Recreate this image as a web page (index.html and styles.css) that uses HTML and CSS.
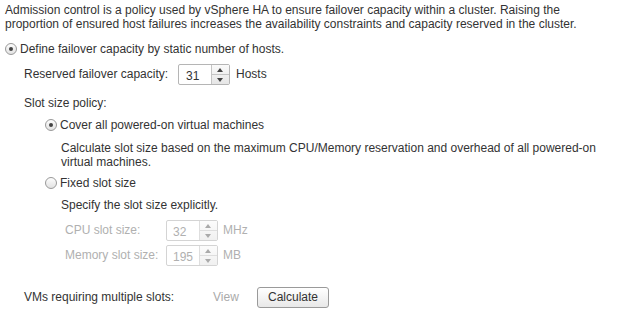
FILE: index.html
```html
<!DOCTYPE html>
<html lang="en">

<head>
    <meta charset="UTF-8">
    <title>Admission Control</title>
    <link rel="stylesheet" href="styles.css">
</head>

<body>
    <p class="intro">Admission control is a policy used by vSphere HA to ensure failover capacity within a cluster. Raising the proportion of ensured host failures increases the availability constraints and capacity reserved in the cluster.</p>

    <div class="option top-option">
        <span class="radio checked"></span>
        <span>Define failover capacity by static number of hosts.</span>
    </div>

    <div class="section">
        <div class="field reserved">
            <span class="field-label">Reserved failover capacity:</span>
            <span class="spinner">
                <span class="spin-value">31</span>
                <span class="spin-btns"><span class="up"></span><span class="down"></span></span>
            </span>
            <span class="unit">Hosts</span>
        </div>

        <div class="heading">Slot size policy:</div>

        <div class="sub">
            <div class="option">
                <span class="radio checked"></span>
                <span>Cover all powered-on virtual machines</span>
            </div>
            <p class="desc">Calculate slot size based on the maximum CPU/Memory reservation and overhead of all powered-on virtual machines.</p>

            <div class="option fixed">
                <span class="radio"></span>
                <span>Fixed slot size</span>
            </div>
            <p class="desc explicit">Specify the slot size explicitly.</p>

            <div class="slot-fields">
                <div class="field disabled">
                    <span class="slot-label">CPU slot size:</span>
                    <span class="spinner">
                        <span class="spin-value">32</span>
                        <span class="spin-btns"><span class="up"></span><span class="down"></span></span>
                    </span>
                    <span class="unit">MHz</span>
                </div>
                <div class="field disabled">
                    <span class="slot-label">Memory slot size:</span>
                    <span class="spinner">
                        <span class="spin-value">195</span>
                        <span class="spin-btns"><span class="up"></span><span class="down"></span></span>
                    </span>
                    <span class="unit">MB</span>
                </div>
            </div>
        </div>

        <div class="field multi">
            <span class="multi-label">VMs requiring multiple slots:</span>
            <span class="view">View</span>
            <button class="calc">Calculate</button>
        </div>
    </div>
</body>

</html>
```

FILE: styles.css
```css
body {
    margin: 0;
    padding: 3px 5px 0;
    font-family: "Liberation Sans", Arial, sans-serif;
    font-size: 12px;
    line-height: 14px;
    color: #333;
    background: #fff;
}

.intro {
    margin: 0;
}

.option {
    display: flex;
    align-items: center;
    height: 14px;
}

.top-option {
    margin-top: 11px;
}

.radio {
    width: 12px;
    height: 12px;
    box-sizing: border-box;
    border: 1px solid #999;
    border-radius: 50%;
    background: linear-gradient(#fdfdfd, #e2e2e2);
    margin-right: 3px;
    position: relative;
}

.radio.checked::after {
    content: "";
    position: absolute;
    left: 3px;
    top: 3px;
    width: 4px;
    height: 4px;
    border-radius: 50%;
    background: #444;
}

.section {
    padding-left: 19px;
}

.field {
    display: flex;
    align-items: center;
}

.reserved {
    margin-top: 7px;
    height: 22px;
}

.field-label {
    width: 154px;
}

.spinner {
    display: flex;
    height: 21px;
    box-sizing: border-box;
    border: 1px solid #b5b5b5;
    border-radius: 2px;
    background: #fff;
}

.spin-value {
    width: 32px;
    box-sizing: border-box;
    padding: 2px 0 0 7px;
    line-height: 18px;
}

.spin-btns {
    width: 17px;
    display: flex;
    flex-direction: column;
    border-left: 1px solid #c4c4c4;
    background: linear-gradient(#fafafa, #e6e6e6);
}

.spin-btns span {
    flex: 1;
    position: relative;
}

.spin-btns .up {
    border-bottom: 1px solid #c4c4c4;
}

.spin-btns .up::after,
.spin-btns .down::after {
    content: "";
    position: absolute;
    left: 5px;
    width: 0;
    height: 0;
    border-left: 3px solid transparent;
    border-right: 3px solid transparent;
}

.spin-btns .up::after {
    top: 3px;
    border-bottom: 4px solid #444;
}

.spin-btns .down::after {
    top: 3px;
    border-top: 4px solid #444;
}

.unit {
    margin-left: 6px;
}

.heading {
    margin-top: 11px;
}

.sub {
    padding-left: 21px;
}

.sub .option {
    margin-top: 8px;
}

.desc {
    margin: 9px 0 0 16px;
}

.sub .fixed {
    margin-top: 7px;
}

.desc.explicit {
    margin-top: 8px;
}

.slot-fields {
    padding-left: 20px;
    margin-top: 7px;
}

.slot-fields .field {
    height: 22px;
    margin-bottom: 3px;
}

.slot-label {
    width: 101px;
}

.disabled {
    color: #b0b0b0;
}

.disabled .spinner {
    border-color: #d4d4d4;
}

.disabled .spin-value {
    padding-left: 6px;
    color: #b0b0b0;
}

.disabled .spin-btns {
    border-left-color: #dedede;
    background: linear-gradient(#fcfcfc, #f0f0f0);
}

.disabled .spin-btns .up {
    border-bottom-color: #dedede;
}

.disabled .spin-btns .up::after {
    border-bottom-color: #aaa;
}

.disabled .spin-btns .down::after {
    border-top-color: #aaa;
}

.disabled .unit {
    margin-left: 5px;
}

.multi {
    margin-top: 20px;
    height: 22px;
}

.multi-label {
    width: 189px;
}

.view {
    color: #aaa;
    width: 44px;
}

.calc {
    font-family: "Liberation Sans", Arial, sans-serif;
    font-size: 12px;
    color: #333;
    height: 21px;
    padding: 0 10px;
    border: 1px solid #9a9a9a;
    border-radius: 3px;
    background: linear-gradient(#ffffff, #e8e8e8);
}
```
